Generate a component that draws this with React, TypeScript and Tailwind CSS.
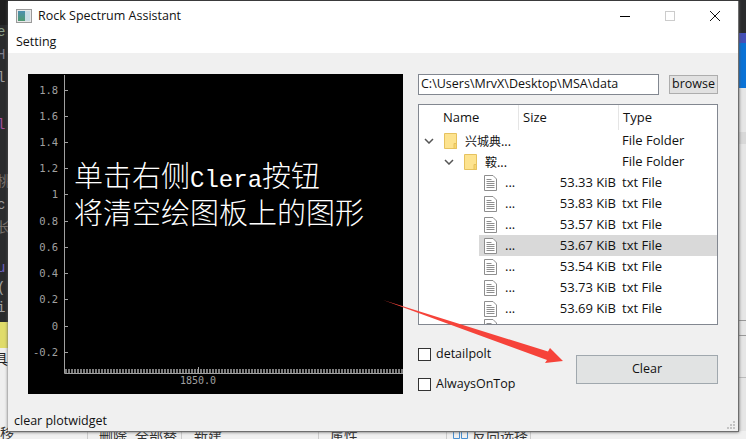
const ticks = [
  ['1.8', 90], ['1.6', 116], ['1.4', 142], ['1.2', 168], ['1', 194], ['0.8', 221],
  ['0.6', 247], ['0.4', 273], ['0.2', 299], ['0', 326], ['-0.2', 352],
] as const

const files = ['53.33', '53.83', '53.57', '53.67', '53.54', '53.73', '53.69']

// bits of the editor behind the window, only their right edge shows
const behindLeft = [
  ['e', 32, 'text-[#8aa08a]'], ['H', 55, 'text-[#7d7d8c]'], ['l', 78, 'text-[#9a9a9a]'], ['l', 125, 'text-[#a0509a]'],
  ['桃', 182, 'text-[#77706a]'], ['c', 205, 'text-[#9a9a9a]'], ['长', 228, 'text-[#77706a]'], ['u', 268, 'text-[#6a60c0]'],
  ['(', 288, 'text-[#a0a0a0]'], ['i', 308, 'text-[#a0a0a0]'],
] as const

const behindBottom = [
  ['移', 0, 0], ['全部替', 135, 3], ['删除', 99, 3], ['新建', 194, 3], ['属性', 330, 3], ['反向选择', 472, 3],
] as const

function AppIcon() {
  return (
    <svg width="16" height="14" viewBox="0 0 16 14" className="shrink-0">
      <defs>
        <linearGradient id="appIconFill" x1="0" y1="0" x2="0" y2="1">
          <stop offset="0" stopColor="#4d8fb0" />
          <stop offset="1" stopColor="#4f9a70" />
        </linearGradient>
      </defs>
      <rect x="0.5" y="0.5" width="15" height="13" fill="#e8e8e8" stroke="#9a9a9a" />
      <rect x="2" y="2" width="7" height="10" fill="url(#appIconFill)" />
      <rect x="9" y="2" width="5" height="10" fill="#c9dbe4" />
    </svg>
  )
}

function Chevron() {
  return (
    <svg width="10" height="6" viewBox="0 0 10 6">
      <path d="M1 1l4 4 4-4" fill="none" stroke="#555" strokeWidth="1.5" />
    </svg>
  )
}

function FolderIcon() {
  return (
    <svg width="13" height="16" viewBox="0 0 13 16" className="shrink-0">
      <path d="M.5.5h12v15H.5z" fill="#fde38f" stroke="#e6c25f" />
      <path d="M10 10.5h2.500v5H10z" fill="#f8d66f" stroke="#e6c25f" />
    </svg>
  )
}

function FileIcon() {
  return (
    <svg width="13" height="16" viewBox="0 0 13 16" className="shrink-0">
      <path d="M.5.5h8.500l3.500 3.500v11.500H.5z" fill="#fff" stroke="#8e8e8e" />
      <path d="M2.500 4.500h5M2.500 6.500h8M2.500 8.500h8M2.500 10.500h8M2.500 12.500h8" stroke="#8e8e8e" />
    </svg>
  )
}

function PlotArea() {
  const hatch = []
  for (let x = 65; x < 403; x += 3) hatch.push(x)
  return (
    <div className="relative w-[375px] h-[320px] bg-black shrink-0">
      <svg width="375" height="320" viewBox="28 74 375 320" className="block">
        {hatch.map((x) => (
          <path key={x} d={`M${x + 1} 369v4`} stroke="#7c7c7c" strokeWidth="2" />
        ))}
        <path d="M64.500 75v298.500H403" fill="none" stroke="#a0a0a0" />
        {ticks.map(([label, y]) => (
          <g key={label}>
            <path d={`M64 ${y + 0.5}h4`} stroke="#a0a0a0" />
            <text x="58" y={y + 4} textAnchor="end" fontSize="10.500" fill="#a0a0a0" fontFamily="'DejaVu Sans Mono', monospace" letterSpacing="-0.1">
              {label}
            </text>
          </g>
        ))}
        <path d="M198.500 367v6" stroke="#a0a0a0" />
        <text x="198" y="384" textAnchor="middle" fontSize="10" fill="#a0a0a0" fontFamily="'DejaVu Sans Mono', monospace">
          1850.0
        </text>
      </svg>
      <div className="absolute left-[46px] top-[82px] text-[29px] leading-[36px] text-white font-['Noto_Sans_CJK_SC',serif] font-light whitespace-nowrap">
        <div>
          单击右侧<span className="font-['Liberation_Mono',monospace] text-[24px] leading-none">Clera</span>按钮
        </div>
        <div>将清空绘图板上的图形</div>
      </div>
    </div>
  )
}

function FileTree() {
  return (
    <div className="w-[300px] h-[221px] border border-[#828790] bg-white overflow-hidden text-[13px] text-[#111]">
      <div className="flex h-[25px] items-center">
        <div className="w-[100px] pl-[24px] border-r border-[#e5e5e5] h-full flex items-center">Name</div>
        <div className="w-[100px] pl-[4px] border-r border-[#e5e5e5] h-full flex items-center">Size</div>
        <div className="pl-[4px]">Type</div>
      </div>
      <div className="flex h-[21px] items-center">
        <div className="w-[25px] pl-[5px] flex"><Chevron /></div>
        <FolderIcon />
        <span className="ml-[8px] w-[157px] text-[12px] font-['Noto_Sans_CJK_SC',sans-serif]">兴城典...</span>
        <span>File Folder</span>
      </div>
      <div className="flex h-[21px] items-center">
        <div className="w-[45px] pl-[25px] flex"><Chevron /></div>
        <FolderIcon />
        <span className="ml-[8px] w-[137px] text-[12px] font-['Noto_Sans_CJK_SC',sans-serif]">鞍...</span>
        <span>File Folder</span>
      </div>
      {files.map((size, i) => (
        <div key={size} className={`flex h-[21px] items-center ml-[60px] ${i === 3 ? 'bg-[#d9d9d9]' : ''}`}>
          <div className="pl-[5px] flex"><FileIcon /></div>
          <span className="ml-[8px] w-[53px]">...</span>
          <span className="w-[58px] text-right whitespace-nowrap">{size} KiB</span>
          <span className="ml-[6px]">txt File</span>
        </div>
      ))}
      <div className="flex h-[21px] items-start ml-[60px] pl-[5px]"><FileIcon /></div>
    </div>
  )
}

function Check({ label }: { label: string }) {
  return (
    <label className="flex items-center gap-[5px] h-[14px]">
      <span className="w-[13px] h-[13px] border border-[#333] bg-white" />
      <span>{label}</span>
    </label>
  )
}

function Backdrop() {
  return (
    <>
      <div className="absolute left-0 top-0 w-[8px] h-[25px] bg-[#1f1f1f]" />
      {behindLeft.map(([ch, y, color]) => (
        <span key={y} className={`absolute left-[-3px] text-[14px] leading-none font-['Liberation_Mono','Noto_Sans_CJK_SC',monospace] ${color}`} style={{ top: y - 7 }}>
          {ch}
        </span>
      ))}
      <div className="absolute left-0 top-[322px] w-[8px] h-[26px] bg-[#e0dc6a]" />
      <div className="absolute left-0 top-[348px] w-[8px] h-[91px] bg-[#efefef]" />
      <span className="absolute left-[-6px] top-[351px] text-[14px] leading-none text-[#222] font-['Noto_Sans_CJK_SC',sans-serif]">具</span>
      <div className="absolute right-0 top-[33px] w-[8px] h-[55px] bg-[#0a72d6]" />
      <div className="absolute right-0 top-[33px] w-[8px] h-[10px] bg-[#4450b8]" />
      <div className="absolute right-0 top-[88px] w-[8px] h-[351px] bg-[#e6e6e6]" />
      <div className="absolute right-0 top-[132px] w-[8px] h-[12px] bg-[#d8d8d8]" />
      <div className="absolute right-0 top-[320px] w-[8px] h-px bg-[#999]" />
      <div className="absolute right-0 top-[335px] w-[8px] h-px bg-[#999]" />
      <div className="absolute right-0 top-[377px] w-[8px] h-px bg-[#bbb]" />
      <div className="absolute left-0 top-[431px] w-[746px] h-[8px] bg-[#f0f0f0]" />
      <div className="absolute left-[87px] top-[431px] w-px h-[8px] bg-[#ccc]" />
      <div className="absolute left-[181px] top-[431px] w-px h-[8px] bg-[#ccc]" />
      <div className="absolute left-[318px] top-[431px] w-px h-[8px] bg-[#ccc]" />
      <div className="absolute left-[446px] top-[431px] w-px h-[8px] bg-[#ccc]" />
      <div className="absolute left-[530px] top-[431px] w-px h-[8px] bg-[#ccc]" />
      {behindBottom.map(([text, x, y]) => (
        <span key={text} className="absolute text-[14px] leading-none text-[#333] font-['Noto_Sans_CJK_SC',sans-serif] whitespace-nowrap" style={{ left: x, top: 425 + y }}>
          {text}
        </span>
      ))}
      <svg width="16" height="8" viewBox="0 0 16 8" className="absolute left-[453px] top-[431px]">
        <path d="M.5.5h6v7h-6zM8.500.5h6v7h-6z" fill="none" stroke="#4a90d0" />
      </svg>
    </>
  )
}

export default function App() {
  return (
    <div className="relative w-[746px] h-[439px] overflow-hidden bg-[#2a2b2d] font-['Open_Sans','Noto_Sans',sans-serif] text-[12.5px] text-[#111]">
      <Backdrop />
      <div className="absolute left-[8px] top-[1px] w-[731px] h-[431px] flex flex-col bg-[#f0f0f0] border-r border-b border-[#6e6e6e] shadow-[0_0_3px_#555]">
        <div className="h-[30px] bg-white flex items-center pl-[8px] pr-[14px]">
          <AppIcon />
          <span className="ml-[6px]">Rock Spectrum Assistant</span>
          <div className="ml-auto flex items-center gap-[35px]">
            <span className="w-[10px] h-px bg-black" />
            <span className="w-[10px] h-[10px] border border-[#ccc]" />
            <svg width="10" height="10" viewBox="0 0 10 10" className="mr-[4px]"><path d="M0 0l10 10M10 0L0 10" stroke="#111" /></svg>
          </div>
        </div>
        <div className="h-[22px] bg-white pl-[8px] flex items-center">Setting</div>
        <div className="flex-1 flex pl-[20px] pt-[21px]">
          <PlotArea />
          <div className="ml-[15px] w-[300px] flex flex-col">
            <div className="flex items-center">
              <div className="w-[241px] h-[21px] border border-[#828790] bg-white flex items-center pl-[2px]">C:\Users\MrvX\Desktop\MSA\data</div>
              <div className="ml-[10px] w-[49px] h-[19px] bg-[#e1e1e1] border border-[#adadad] flex items-center justify-center">browse</div>
            </div>
            <div className="mt-[9px]"><FileTree /></div>
            <div className="flex mt-[17px]">
              <div className="flex flex-col gap-[16px] pt-[5px]">
                <Check label="detailpolt" />
                <Check label="AlwaysOnTop" />
              </div>
              <div className="ml-auto mt-[13px] w-[142px] h-[29px] bg-[#e1e3e3] border border-[#a0a8ae] flex items-center justify-center">Clear</div>
            </div>
          </div>
        </div>
        <div className="h-[20px] pl-[6px] flex items-center justify-between">
          <span>clear plotwidget</span>
          <svg width="10" height="10" viewBox="0 0 10 10" className="mr-[2px] mt-[8px]">
            <path d="M7 1h2v2H7zM4 4h2v2H4zM7 4h2v2H7zM1 7h2v2H1zM4 7h2v2H4zM7 7h2v2H7z" fill="#c4c4c4" />
          </svg>
        </div>
      </div>
      <svg width="746" height="439" className="absolute inset-0 pointer-events-none">
        <path d="M383 300L548 351.500 550 348 563 361 545 363 547 360z" fill="#f6433a" />
      </svg>
    </div>
  )
}
